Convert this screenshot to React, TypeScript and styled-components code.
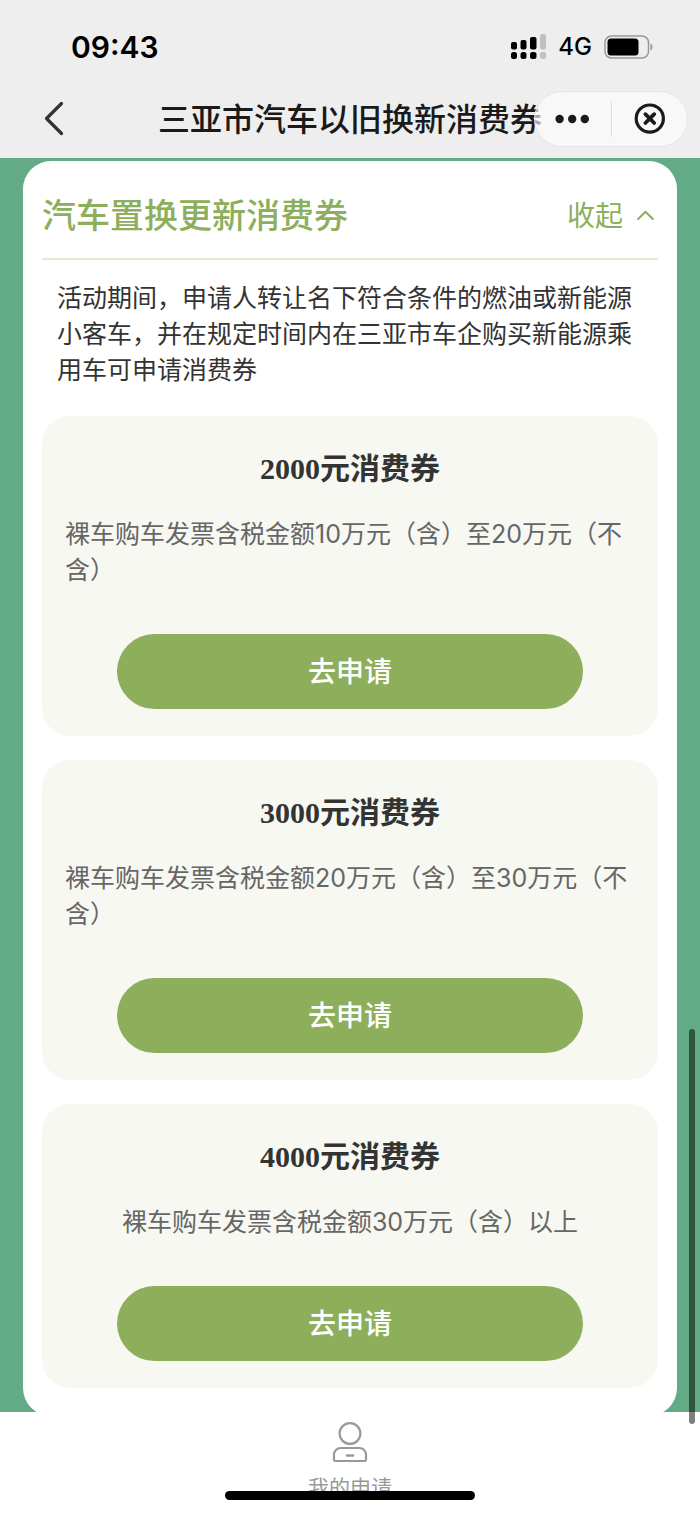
import React from "react";
import styled, { createGlobalStyle } from "styled-components";

const GlobalStyle = createGlobalStyle`
  * { box-sizing: border-box; }
  body {
    margin: 0;
    background: #ffffff;
    font-family: Inter, "Noto Sans CJK SC", sans-serif;
    color: #333333;
  }
  h1, h2, h3, p { margin: 0; }
  button {
    border: 0;
    padding: 0;
    background: none;
    font-family: inherit;
    color: inherit;
    cursor: pointer;
  }
  svg { display: block; }
`;

const Screen = styled.div`
  position: relative;
  display: flex;
  flex-direction: column;
  height: 100vh;
  overflow: hidden;
`;

const Header = styled.header`
  flex: none;
  background: #eeeeee;
`;

const StatusBar = styled.div`
  display: flex;
  align-items: center;
  justify-content: space-between;
  height: 80px;
  padding: 14px 46px 0 71px;
  color: #000000;
`;

const Clock = styled.time`
  font-size: 30px;
  line-height: 36px;
  font-weight: 600;
`;

const StatusIcons = styled.div`
  display: flex;
  align-items: center;
  gap: 12px;
  font-size: 24px;
  line-height: 30px;
  font-weight: 500;
`;

const NavBar = styled.nav`
  display: grid;
  grid-template-columns: minmax(0, 1fr) auto minmax(0, 1fr);
  align-items: center;
  height: 78px;
  padding-right: 12px;
  padding-left: 12px;
`;

const BackButton = styled.button`
  justify-self: start;
  padding: 8px 30px;
`;

const PageTitle = styled.h1`
  padding-top: 2px;
  font-size: 32px;
  line-height: 48px;
  font-weight: 500;
  color: #1a1a1a;
  white-space: nowrap;
`;

const Capsule = styled.div`
  z-index: 1;
  justify-self: end;
  display: flex;
  align-items: center;
  width: 154px;
  height: 56px;
  border: 1px solid #e6e6e6;
  border-radius: 28px;
  background: rgba(255, 255, 255, 0.6);
`;

const CapsuleButton = styled.button`
  flex: 1;
  display: flex;
  align-items: center;
  justify-content: center;
  height: 36px;

  & + & {
    border-left: 1px solid #dddddd;
  }
`;

const Content = styled.main`
  flex: 1;
  min-height: 0;
  padding: 3px 23px;
  overflow-y: auto;
  scrollbar-width: none;
  background: #63ab87;
`;

const Card = styled.section`
  padding: 0 19px 28px;
  border-radius: 28px;
  background: #ffffff;
`;

const CardHeader = styled.div`
  display: flex;
  align-items: center;
  justify-content: space-between;
  height: 99px;
  padding-top: 12px;
  border-bottom: 2px solid #e0ebd2;
  color: #8dae5a;
`;

const CardTitle = styled.h2`
  font-size: 34px;
  line-height: 50px;
  font-weight: 500;
`;

const CollapseButton = styled.button`
  display: flex;
  align-items: center;
  gap: 14px;
  padding-right: 4px;
  font-size: 28px;
  line-height: 42px;
`;

const Description = styled.p`
  padding: 20px 15px 28px;
  font-size: 25px;
  line-height: 36px;
`;

const CouponList = styled.div`
  display: flex;
  flex-direction: column;
  gap: 24px;
`;

const Coupon = styled.article`
  display: flex;
  flex-direction: column;
  align-items: center;
  padding: 32px 23px 27px;
  border-radius: 28px;
  background: #f7f8f2;
`;

const CouponTitle = styled.h3`
  font-family: "Liberation Serif", "Noto Sans CJK SC", serif;
  font-size: 30px;
  line-height: 42px;
  font-weight: 700;
`;

const CouponRule = styled.p`
  margin-top: 26px;
  font-size: 25px;
  line-height: 36px;
  color: #666666;
`;

const ApplyButton = styled.button`
  align-self: stretch;
  height: 75px;
  margin: 46px 52px 0;
  border-radius: 38px;
  background: #8dae5a;
  color: #ffffff;
  font-size: 28px;
  line-height: 42px;
  font-weight: 500;
`;

const TabBar = styled.footer`
  flex: none;
  display: flex;
  justify-content: center;
  height: 103px;
  background: #ffffff;
`;

const Tab = styled.button`
  display: flex;
  flex-direction: column;
  align-items: center;
  gap: 10px;
  padding-top: 9px;
  font-size: 21px;
  line-height: 30px;
  color: #999999;
`;

const ScrollIndicator = styled.div`
  position: absolute;
  right: 5px;
  bottom: 91px;
  width: 6px;
  height: 395px;
  border-radius: 3px;
  background: rgba(0, 0, 0, 0.5);
`;

const HomeIndicator = styled.div`
  position: absolute;
  bottom: 15px;
  left: 50%;
  width: 250px;
  height: 9px;
  margin-left: -125px;
  border-radius: 5px;
  background: #000000;
`;

const SignalIcon = () => (
  <svg width="36" height="26" viewBox="0 0 36 26" aria-hidden="true">
    <rect x="1" y="8" width="6" height="7.5" rx="2" />
    <rect x="10.5" y="6" width="6" height="9.5" rx="2" />
    <rect x="20" y="3" width="6.5" height="12.5" rx="2" />
    <rect x="30" y="0" width="6" height="15.5" rx="2" fill="#c0c0c0" />
    <rect x="1" y="18" width="6" height="7" rx="2.5" />
    <rect x="10.5" y="18" width="6" height="7" rx="2.5" />
    <rect x="20" y="18" width="6.5" height="7" rx="2.5" />
    <rect x="30" y="18" width="6" height="7" rx="2.5" fill="#c0c0c0" />
  </svg>
);

const BatteryIcon = () => (
  <svg width="50" height="24" viewBox="0 0 50 24" aria-hidden="true">
    <rect x="1" y="1" width="43.5" height="22" rx="6.5" fill="none" stroke="#999999" strokeWidth="1.5" />
    <rect x="3.5" y="3.5" width="31" height="17" rx="3.5" />
    <path d="M46.5 8.5c2.6 1 2.6 6 0 7z" fill="#999999" />
  </svg>
);

const BackIcon = () => (
  <svg width="24" height="36" viewBox="0 0 24 36" fill="none" stroke="#333333" strokeWidth="3.2" strokeLinecap="round" strokeLinejoin="round" aria-hidden="true">
    <path d="M19.5 2.5 4.5 17.5 19.5 32.5" />
  </svg>
);

const MoreIcon = () => (
  <svg width="36" height="10" viewBox="0 0 36 10" fill="#1a1a1a" aria-hidden="true">
    <circle cx="4.6" cy="5" r="4.2" />
    <circle cx="17.2" cy="5" r="4.2" />
    <circle cx="29.8" cy="5" r="4.2" />
  </svg>
);

const CloseIcon = () => (
  <svg width="32" height="32" viewBox="0 0 32 32" fill="none" stroke="#1a1a1a" strokeWidth="3.2" aria-hidden="true">
    <circle cx="16.8" cy="15.6" r="13.6" />
    <path d="m12.4 11.2 8.8 8.8M21.2 11.2l-8.800 8.800" strokeWidth="3.8" strokeLinecap="round" />
  </svg>
);

const ChevronUpIcon = () => (
  <svg width="17" height="11" viewBox="0 0 17 11" fill="none" stroke="currentColor" strokeWidth="2" strokeLinecap="round" strokeLinejoin="round" aria-hidden="true">
    <path d="M1.2 9 8.5 1.8 15.8 9" />
  </svg>
);

const UserIcon = () => (
  <svg width="36" height="42" viewBox="0 0 36 42" fill="none" stroke="#999999" strokeWidth="2.2" aria-hidden="true">
    <circle cx="18" cy="12.5" r="10.4" />
    <path d="M8.5 27h19a6.5 6.5 0 0 1 6.5 6.5v5.3a1.2 1.2 0 0 1-1.2 1.2H3.2A1.2 1.2 0 0 1 2 38.8v-5.3A6.5 6.5 0 0 1 8.5 27z" />
    <path d="M15 34.5h6" strokeWidth="2.6" strokeLinecap="round" />
  </svg>
);

const coupons = [
  { title: "2000元消费券", rule: "裸车购车发票含税金额10万元（含）至20万元（不含）" },
  { title: "3000元消费券", rule: "裸车购车发票含税金额20万元（含）至30万元（不含）" },
  { title: "4000元消费券", rule: "裸车购车发票含税金额30万元（含）以上" },
];

export default function App() {
  return (
    <>
      <GlobalStyle />
      <Screen>
        <Header>
          <StatusBar>
            <Clock>09:43</Clock>
            <StatusIcons>
              <SignalIcon />
              <span>4G</span>
              <BatteryIcon />
            </StatusIcons>
          </StatusBar>
          <NavBar>
            <BackButton type="button" aria-label="返回">
              <BackIcon />
            </BackButton>
            <PageTitle>三亚市汽车以旧换新消费券</PageTitle>
            <Capsule>
              <CapsuleButton type="button" aria-label="更多">
                <MoreIcon />
              </CapsuleButton>
              <CapsuleButton type="button" aria-label="关闭">
                <CloseIcon />
              </CapsuleButton>
            </Capsule>
          </NavBar>
        </Header>

        <Content>
          <Card>
            <CardHeader>
              <CardTitle>汽车置换更新消费券</CardTitle>
              <CollapseButton type="button" aria-expanded="true">
                收起
                <ChevronUpIcon />
              </CollapseButton>
            </CardHeader>
            <Description>
              活动期间，申请人转让名下符合条件的燃油或新能源小客车，并在规定时间内在三亚市车企购买新能源乘用车可申请消费券
            </Description>
            <CouponList>
              {coupons.map((coupon) => (
                <Coupon key={coupon.title}>
                  <CouponTitle>{coupon.title}</CouponTitle>
                  <CouponRule>{coupon.rule}</CouponRule>
                  <ApplyButton type="button">去申请</ApplyButton>
                </Coupon>
              ))}
            </CouponList>
          </Card>
        </Content>

        <TabBar>
          <Tab type="button">
            <UserIcon />
            我的申请
          </Tab>
        </TabBar>
        <ScrollIndicator />
        <HomeIndicator />
      </Screen>
    </>
  );
}
